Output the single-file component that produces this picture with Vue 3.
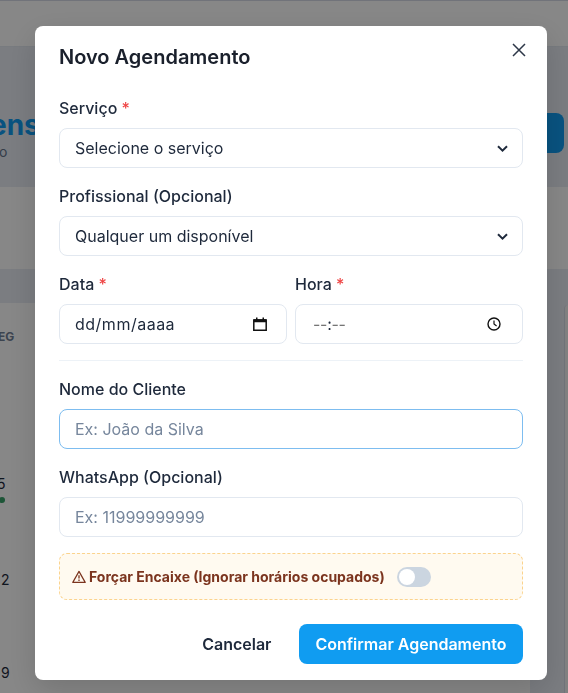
<script setup>
const days = [
  { label: '5', cls: 'day-a', dot: true },
  { label: '2', cls: 'day-b', dot: false },
  { label: '9', cls: 'day-c', dot: false }
]
</script>

<template>
  <div class="page">
    <header class="topbar"></header>
    <section class="hero">
      <div class="hero-text">
        <h1>ens</h1>
        <p>o</p>
      </div>
      <div class="hero-btn"></div>
    </section>
    <section class="filters"></section>
    <section class="table-head"></section>
    <section class="table-body">
      <div class="cal">
        <div class="weekday">EG</div>
        <div v-for="d in days" :key="d.label" class="day" :class="d.cls">
          <span>{{ d.label }}</span>
          <i v-if="d.dot" class="dot"></i>
        </div>
      </div>
      <div class="gutter"></div>
      <div class="side"></div>
    </section>
  </div>

  <div class="overlay">
    <form class="modal" @submit.prevent>
      <button class="close" type="button" aria-label="Fechar">
        <svg width="14" height="14" viewBox="0 0 14 14"><path d="M1 1 13 13M13 1 1 13" /></svg>
      </button>
      <h2>Novo Agendamento</h2>

      <div class="field">
        <label>Serviço <em>*</em></label>
        <div class="select-wrap">
          <select class="control">
            <option>Selecione o serviço</option>
          </select>
          <svg class="chev" width="11" height="7" viewBox="0 0 11 7"><path d="M1 1.2 5.5 5.6 10 1.2" /></svg>
        </div>
      </div>

      <div class="field">
        <label>Profissional (Opcional)</label>
        <div class="select-wrap">
          <select class="control">
            <option>Qualquer um disponível</option>
          </select>
          <svg class="chev" width="11" height="7" viewBox="0 0 11 7"><path d="M1 1.2 5.5 5.6 10 1.2" /></svg>
        </div>
      </div>

      <div class="row">
        <div class="field">
          <label>Data <em>*</em></label>
          <div class="control dateish date">
            <span class="date-text">dd/mm/aaaa</span>
            <svg width="14" height="14" viewBox="0 0 14 14">
              <path d="M.8 3h12.4v10.2H.8z" fill="none" stroke="#111" stroke-width="1.5" />
              <path d="M.8 2.2h12.4v3H.8zM3 .4h1.5v2H3zM9.5 .4H11v2H9.5z" fill="#111" />
            </svg>
          </div>
        </div>
        <div class="field">
          <label>Hora <em>*</em></label>
          <div class="control dateish time">
            <span class="time-text"><s>--</s>:<s>--</s></span>
            <svg width="14" height="14" viewBox="0 0 14 14">
              <circle cx="7" cy="7" r="6" fill="none" stroke="#111" stroke-width="1.4" />
              <path d="M7 3.6V7L9.6 9" fill="none" stroke="#111" stroke-width="1.2" />
            </svg>
          </div>
        </div>
      </div>

      <hr />

      <div class="field">
        <label>Nome do Cliente</label>
        <input class="control focus" type="text" placeholder="Ex: João da Silva" />
      </div>

      <div class="field">
        <label>WhatsApp (Opcional)</label>
        <input class="control" type="text" placeholder="Ex: 11999999999" />
      </div>

      <div class="force">
        <svg width="14" height="14" viewBox="0 0 14 14">
          <path d="M7 1.4 13.2 12.4H.8z" fill="none" stroke="#7b341e" stroke-width="1.2" stroke-linejoin="round" />
          <path d="M7 5.2V8.6M7 9.6v1.3" stroke="#7b341e" stroke-width="1.3" />
        </svg>
        <span>Forçar Encaixe (Ignorar horários ocupados)</span>
        <i class="toggle"><b></b></i>
      </div>

      <div class="actions">
        <button class="cancel" type="button">Cancelar</button>
        <button class="confirm" type="submit">Confirmar Agendamento</button>
      </div>
    </form>
  </div>
</template>

<style>
html, body { margin: 0; height: 100%; overflow: hidden; }
</style>

<style scoped>
.page {
  width: 568px;
  height: 693px;
  overflow: hidden;
  background: #fff;
  font-family: Inter, "Liberation Sans", sans-serif;
  color: #1e293b;
}
.topbar { height: 46px; background: #fff; border-top: 1px solid #d5dae6; box-sizing: border-box; }
.hero {
  height: 141px;
  box-sizing: border-box;
  background: #e8ecf4;
  border-top: 1px solid #e2e8f0;
  display: flex;
  align-items: flex-start;
  justify-content: space-between;
  padding: 61px 4px 0 0;
}
.hero-text { margin-left: -10px; white-space: nowrap; }
.hero h1 { margin: 0; font-size: 28px; line-height: 34px; font-weight: 700; color: #109cf1; }
.hero p { margin: 1px 0 0 9px; font-size: 14px; line-height: 18px; color: #64748b; }
.hero-btn { width: 40px; height: 40px; margin-top: 5px; border-radius: 8px; background: #109cf1; }
.filters { height: 82px; background: #fff; }
.table-head { height: 34px; background: #e8ecf4; }
.table-body {
  height: 390px;
  display: grid;
  grid-template-columns: 530px 34px 1fr;
  background: #e8ecf4;
}
.cal { background: #fff; padding-top: 25px; }
.weekday { margin-left: -2px; font-size: 12px; line-height: 18px; font-weight: 700; color: #718096; }
.day { font-size: 14px; line-height: 20px; color: #1e293b; position: relative; }
.day-a { margin: 128px 0 0 -3px; }
.day-b { margin: 76px 0 0 1px; }
.day-c { margin: 73px 0 0 1px; }
.dot {
  position: absolute;
  left: 2px;
  top: 23px;
  width: 6px;
  height: 6px;
  border-radius: 50%;
  background: #38a169;
}
.side {
  margin-top: 2px;
  background: #f4f4f4;
  border-left: 1px solid #d5dae6;
  border-top-left-radius: 8px;
}

.overlay {
  position: fixed;
  inset: 0;
  background: rgba(0, 0, 0, 0.47);
  display: flex;
  align-items: flex-start;
  padding-left: 35px;
  font-family: Inter, "Liberation Sans", sans-serif;
}
.modal {
  position: relative;
  width: 512px;
  height: 654px;
  margin-top: 26px;
  box-sizing: border-box;
  padding: 18px 24px 16px;
  background: #fff;
  border-radius: 8px;
  box-shadow: 0 10px 30px rgba(0, 0, 0, 0.15);
  display: flex;
  flex-direction: column;
  color: #1e293b;
}
h2 { margin: 0 0 26px; font-size: 20px; line-height: 26px; font-weight: 600; color: #1a202c; }
.close { position: absolute; top: 17px; right: 21px; width: 14px; height: 14px; padding: 0; border: 0; background: none; }
.close svg { display: block; stroke: #2d3748; stroke-width: 1.5; fill: none; }
.field { display: flex; flex-direction: column; min-width: 0; margin-bottom: 16px; }
label { font-size: 16px; line-height: 24px; font-weight: 500; margin-bottom: 8px; color: #1e293b; }
label em { font-style: normal; color: #ef4444; }
.control {
  height: 40px;
  width: 100%;
  box-sizing: border-box;
  border: 1px solid #e2e8f0;
  border-radius: 8px;
  padding: 0 15px;
  background-color: #fff;
  font: 400 16px Inter, "Liberation Sans", sans-serif;
  color: #1e293b;
  outline: none;
}
.control::placeholder { color: #76869c; opacity: 1; }
.select-wrap { position: relative; }
.select-wrap select { appearance: none; display: block; }
.chev {
  position: absolute;
  right: 15px;
  top: 17px;
  fill: none;
  stroke: #1e293b;
  stroke-width: 2;
  pointer-events: none;
}
.dateish { display: flex; align-items: center; justify-content: space-between; }
.date { padding-right: 19px; }
.time { padding-right: 21px; }
.date-text { letter-spacing: 0.5px; }
.time-text { letter-spacing: -0.3px; color: #1e293b; padding-left: 2px; }
.time-text s { text-decoration: none; color: #757575; }
.row { display: grid; grid-template-columns: 1fr 1fr; gap: 8px; }
.row .field { margin-bottom: 0; }
hr { border: 0; border-top: 1px solid #edf2f7; margin: 16px 0; }
.focus { border-color: #7dbdf0; }
.force {
  height: 47px;
  flex: none;
  box-sizing: border-box;
  border: 1px dashed #fbd38d;
  border-radius: 8px;
  background: #fffaf0;
  display: flex;
  align-items: center;
  padding: 0 12px;
  gap: 3px;
  font-size: 14px;
  font-weight: 700;
  color: #7b341e;
}
.toggle { width: 34px; height: 20px; border-radius: 10px; background: #cbd5e0; margin-left: 9px; position: relative; }
.toggle b { position: absolute; left: 2px; top: 2px; width: 16px; height: 16px; border-radius: 50%; background: #fff; }
.actions { margin-top: auto; display: flex; justify-content: flex-end; align-items: center; gap: 11px; }
.actions button { height: 40px; border: 0; border-radius: 8px; font: 600 16px Inter, sans-serif; padding: 0 16.5px; }
.cancel { background: transparent; color: #1e293b; }
.confirm { background: #109cf1; color: #fff; }
</style>
